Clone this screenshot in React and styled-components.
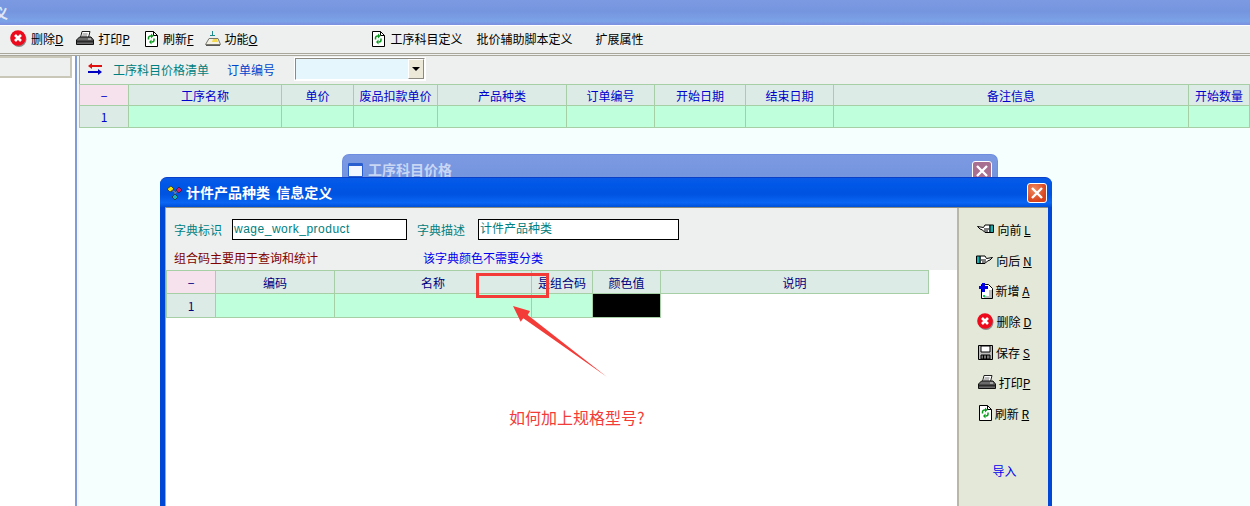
import React from 'react';
import styled, { createGlobalStyle } from 'styled-components';

const FONT = '"Noto Sans CJK SC", "Liberation Sans", sans-serif';

const GlobalStyle = createGlobalStyle`
  html, body {
    margin: 0;
    padding: 0;
    background: #fff;
  }
  body {
    width: 1250px;
    height: 506px;
    overflow: hidden;
    font: 12px ${FONT};
  }
  u {
    text-underline-offset: 1px;
  }
`;

const Page = styled.div`
  position: relative;
  display: flex;
  flex-direction: column;
  width: 1250px;
  height: 506px;
  overflow: hidden;
`;

const TitleBar = styled.div`
  flex: none;
  display: flex;
  align-items: center;
  height: 25px;
  padding-bottom: 1px;
  box-sizing: border-box;
  margin-bottom: 1px;
  background: linear-gradient(#7c9ae2 0, #7595df 45%, #7ba2e6 85%, #7c90e0 100%);
  color: #dfe7f8;
  font-size: 14px;
  font-weight: 700;
  overflow: hidden;
`;

const CutTitle = styled.span`
  margin-left: -6px;
`;

const Toolbar = styled.div`
  flex: none;
  display: flex;
  align-items: center;
  height: 25px;
  padding: 0 0 2px 10px;
  background: #eef0ef;
  border-bottom: 3px double #a9a79b;
  color: #000;
`;

const ToolItem = styled.div`
  display: flex;
  align-items: center;
  gap: ${({ $gap }) => $gap ?? 4}px;
  margin-left: ${({ $ml }) => $ml ?? 0}px;
  white-space: nowrap;
  line-height: 16px;
`;

const Body = styled.div`
  flex: 1;
  display: flex;
  min-height: 0;
`;

const LeftPane = styled.div`
  flex: none;
  width: 75px;
  background: #fff;
`;

const LeftHead = styled.div`
  height: 22px;
  box-sizing: border-box;
  margin-right: 3px;
  background: #eef0ef;
  border: 2px solid #c9c7b8;
  border-left: 0;
`;

const Splitter = styled.div`
  flex: none;
  width: 4px;
  box-sizing: border-box;
  background: #f4f7f6;
  border-left: 2px solid #7f9bd8;
`;

const RightPane = styled.div`
  flex: 1;
  min-width: 0;
  background: #f5fffe;
`;

const FilterBar = styled.div`
  display: flex;
  align-items: center;
  height: 28px;
  padding: 0 0 2px 8px;
  box-sizing: border-box;
  background: #eef0ef;
  border-left: 1px solid #a9a79b;
  color: #008080;
`;

const FilterLabel = styled.span`
  margin-left: ${({ $ml }) => $ml}px;
  color: ${({ $color }) => $color};
  white-space: nowrap;
`;

const Combo = styled.div`
  display: flex;
  justify-content: flex-end;
  width: 130px;
  height: 22px;
  margin-left: 20px;
  box-sizing: border-box;
  background: #e6f6fd;
  border: 1px solid #8c8a80;
  border-right-color: #fff;
  border-bottom-color: #fff;
  outline: 1px solid #fff;
`;

const ComboButton = styled.div`
  display: flex;
  align-items: center;
  justify-content: center;
  width: 16px;
  box-sizing: border-box;
  background: #ece9d8;
  border: 1px solid #8c8a80;
  border-top-color: #fff;
  border-left-color: #fff;

  &::after {
    content: '';
    border: 4px solid transparent;
    border-top: 4px solid #000;
    border-bottom: 0;
  }
`;

const Grid = styled.div`
  display: grid;
  grid-template-columns: ${({ $cols }) => $cols};
  grid-template-rows: ${({ $rows }) => $rows};
  width: max-content;
  color: ${({ $ink }) => $ink};
  border-top: 1px solid #a6cfa6;
  border-left: 1px solid #a6cfa6;
`;

const Cell = styled.div`
  display: flex;
  align-items: center;
  justify-content: center;
  box-sizing: border-box;
  border-right: 1px solid #a6cfa6;
  border-bottom: 1px solid #a6cfa6;
  background: ${({ $bg }) => $bg};
  white-space: nowrap;
  overflow: hidden;
`;

const CORNER = '#f5e2ec';
const HEAD = '#dcebe5';
const ROW = '#bfffdc';

const Window = styled.div`
  position: absolute;
  left: ${({ $x }) => $x}px;
  top: ${({ $y }) => $y}px;
  width: ${({ $w }) => $w}px;
  height: ${({ $h }) => $h}px;
  box-sizing: border-box;
  border-radius: 7px 7px 0 0;
  display: flex;
  flex-direction: column;
`;

const BackWindow = styled(Window)`
  background: linear-gradient(#7c9ae2 0, #7595df 50%, #7ba2e6 100%);
  border: 1px solid #6f8ee0;
  border-bottom: 0;
  padding: 6px 5px 0 5px;
  flex-direction: row;
  align-items: flex-start;
  color: #c9d6f4;
  font-size: 14px;
  font-weight: 700;
  line-height: 16px;
`;

const FrontWindow = styled(Window)`
  background: #0047d6;
  border-top: 1px solid #0a3fc8;
  padding: 0 4px 0 5px;
`;

const WinTitle = styled.div`
  flex: none;
  display: flex;
  align-items: center;
  gap: 4px;
  height: 29px;
  padding: 0 5px 0 7px;
  margin: 0 -4px 0 -5px;
  background: linear-gradient(#0a5ae6 0, #0058e8 20%, #0052e0 55%, #0a66f4 85%, #0050d8 100%);
  color: #fff;
  font-size: 14px;
  font-weight: 700;
  border-radius: 7px 7px 0 0;
`;

const WinCaption = styled.span`
  margin-top: -2px;
`;

const Spacer = styled.div`
  flex: 1;
`;

const CloseBox = styled.div`
  flex: none;
  width: 20px;
  height: 20px;
  box-sizing: border-box;
  display: flex;
  align-items: center;
  justify-content: center;
  border: 1px solid #fff;
  border-radius: 3px;
  background: ${({ $faded }) =>
    $faded ? '#a86f90' : 'radial-gradient(circle at 35% 30%, #ee8a60, #d8431c 70%)'};
`;

const WinBody = styled.div`
  flex: 1;
  display: flex;
  min-height: 0;
  border-top: 1px solid #8d8c80;
`;

const DictPane = styled.div`
  flex: 1;
  min-width: 0;
  background: #fff;
  border-left: 1px solid #a9a79b;
`;

const DictForm = styled.div`
  height: 62px;
  background: #eef0ef;
  color: #008080;
`;

const FormRow = styled.div`
  display: flex;
  align-items: center;
  height: ${({ $h }) => $h}px;
  padding-left: 8px;
`;

const DictInput = styled.div`
  width: ${({ $w }) => $w}px;
  height: 21px;
  margin: 0 10px 0 ${({ $ml }) => $ml}px;
  padding-left: 1px;
  box-sizing: border-box;
  background: #fff;
  border: 1px solid #000;
  line-height: 18px;
  font-family: "Liberation Sans", ${FONT};
  letter-spacing: ${({ $spaced }) => ($spaced ? '0.5px' : '0')};
`;

const Note = styled.span`
  color: ${({ $color }) => $color};
  width: ${({ $w }) => ($w ? `${$w}px` : 'auto')};
`;

const SidePanel = styled.div`
  flex: none;
  width: 91px;
  background: #e4e8d8;
  border-left: 2px solid #b8b7a8;
  box-sizing: border-box;
  display: flex;
  flex-direction: column;
  align-items: center;
  padding-top: 6px;
`;

const SideButton = styled.div`
  display: flex;
  align-items: center;
  justify-content: center;
  gap: 3px;
  height: 30.7px;
  flex: none;
  width: 100%;
  padding-left: 1px;
  box-sizing: border-box;
  white-space: nowrap;
  color: #000;
`;

const ImportLink = styled.div`
  margin-top: 33px;
  padding-left: 2px;
  color: #0000ee;
`;

const RedBox = styled.div`
  position: absolute;
  left: 476px;
  top: 273px;
  width: 73px;
  height: 25px;
  box-sizing: border-box;
  border: 3px solid #f33c38;
`;

const Arrow = styled.svg`
  position: absolute;
  left: 505px;
  top: 300px;
`;

const Question = styled.div`
  position: absolute;
  left: 509px;
  top: 407px;
  color: #f33c38;
  font-size: 16px;
  line-height: 20px;
  white-space: nowrap;
`;

const Icon = styled.svg`
  flex: none;
  display: block;
`;

const TitleGlyph = styled(Icon)`
  margin: 2px 5px 0 0;
`;

const DeleteIcon = () => (
  <Icon width="17" height="17" viewBox="0 0 17 17">
    <circle cx="9" cy="9.5" r="7.5" fill="#8a8a8a" />
    <circle cx="8" cy="8" r="7.8" fill="#ec0a1c" />
    <path d="M5 5l6 6M11 5l-6 6" stroke="#fff" strokeWidth="2.6" />
  </Icon>
);

const PrintIcon = () => (
  <Icon width="18" height="15" viewBox="0 0 18 15">
    <path d="M6 .5h8l-1.500 6h-8z" fill="#fff" stroke="#222" />
    <path d="M6.500 3h5M6 5h5" stroke="#777" />
    <path d="M3.500 6h11.500l2.500 3v4.500H.5V9z" fill="#6a6a6a" stroke="#111" />
    <path d="M1 9.500h16v2H1z" fill="#2a2a2a" />
    <path d="M12 8h3" stroke="#ddd" />
  </Icon>
);

const RefreshIcon = () => (
  <Icon width="13" height="16" viewBox="0 0 13 16">
    <path d="M.5.5h8l4 4v11H.5z" fill="#fff" stroke="#000" />
    <path d="M8.500.5v4h4" fill="none" stroke="#000" />
    <path d="M3.500 8.500V7a2 2 0 0 1 2-2H6" fill="none" stroke="#0a9a1e" strokeWidth="1.5" />
    <path d="M6 2.500L8.500 5 6 7.500z" fill="#0a9a1e" />
    <path d="M9 7.500V9a2 2 0 0 1-2 2h-.5" fill="none" stroke="#0a9a1e" strokeWidth="1.5" />
    <path d="M6.500 8.500L4 11l2.500 2.500z" fill="#0a9a1e" />
  </Icon>
);

const FunctionIcon = () => (
  <Icon width="16" height="16" viewBox="0 0 16 16">
    <path d="M7 0h1v4h2v1H5V4h2z" fill="#1f8a8a" />
    <path d="M4 7.500h9l2.500 6H.5z" fill="#f3f1e4" stroke="#77776c" />
    <path d="M8 8h4l1 3H7z" fill="#f5d94a" />
    <path d="M1 14.500h14" stroke="#555" />
  </Icon>
);

const SwapIcon = () => (
  <Icon width="14" height="12" viewBox="0 0 14 12">
    <path d="M3 3h11" stroke="#e01010" strokeWidth="2" />
    <path d="M4 0L0 3l4 3z" fill="#e01010" />
    <path d="M0 9h11" stroke="#0000c0" strokeWidth="2" />
    <path d="M10 6l4 3-4 3z" fill="#0000c0" />
  </Icon>
);

const WindowIcon = () => (
  <TitleGlyph width="15" height="14" viewBox="0 0 15 14">
    <path d="M.5.5h14v13H.5z" fill="#f4f7ff" stroke="#2b5fd0" />
    <path d="M1 1h13v2H1z" fill="#2b5fd0" />
  </TitleGlyph>
);

const DictIcon = () => (
  <Icon width="15" height="16" viewBox="0 0 15 16">
    <path d="M4 5l4 2v5M8 8l3-2" fill="none" stroke="#888" />
    <path d="M0 4l4-3 3 3-4 3z" fill="#f4e000" stroke="#222" strokeWidth=".7" />
    <path d="M9 5l3-3 3 3-3 3z" fill="#d81870" stroke="#222" strokeWidth=".7" />
    <path d="M5 12l3-3 3 3-3 3z" fill="#20b0b0" stroke="#222" strokeWidth=".7" />
  </Icon>
);

const CloseX = () => (
  <Icon width="14" height="14" viewBox="0 0 14 14">
    <path d="M2 2l10 10M12 2L2 12" stroke="#fff" strokeWidth="2.4" />
  </Icon>
);

const HandLeftIcon = () => (
  <Icon width="17" height="10" viewBox="0 0 17 10">
    <path d="M.5 2.500l6 1L8 1h5v7.500H8L5.500 6 3 5z" fill="#fff" stroke="#000" />
    <path d="M7 5h5M7 7h4" stroke="#000" />
    <path d="M13 1h3.500v7.500H13z" fill="#16b0b0" stroke="#000" />
  </Icon>
);

const HandRightIcon = () => (
  <Icon width="17" height="10" viewBox="0 0 17 10">
    <path d="M16.500 2.500l-6 1L9 1H4v7.500h5L11.500 6 14 5z" fill="#fff" stroke="#000" />
    <path d="M10 5H5M10 7H6" stroke="#000" />
    <path d="M4 1H.5v7.500H4z" fill="#16b0b0" stroke="#000" />
  </Icon>
);

const NewIcon = () => (
  <Icon width="14" height="17" viewBox="0 0 14 17">
    <path d="M2.500 2.500h7l4 4v10h-11z" fill="#fff" stroke="#000" />
    <path d="M10 8h3v8H5v-2h5z" fill="#bbb" />
    <path d="M0 4h3V1h3v3h3v3H6v3H3V7H0z" fill="#0000e0" />
    <path d="M4 13h2v2H4z" fill="#10d060" />
  </Icon>
);

const SaveIcon = () => (
  <Icon width="15" height="15" viewBox="0 0 15 15">
    <path d="M.5.5h14v14H.5z" fill="#bdbdbd" stroke="#000" />
    <path d="M3 1h9v6H3z" fill="#fff" stroke="#000" />
    <path d="M3 10h9v4H3z" fill="#777" stroke="#000" />
    <path d="M5.500 10v4M8.500 10v4" stroke="#000" />
  </Icon>
);

const mainCols = [49, 153, 72, 84, 129, 88, 91, 88, 355, 61];
const mainHeads = ['工序名称', '单价', '废品扣款单价', '产品种类', '订单编号', '开始日期', '结束日期', '备注信息', '开始数量'];
const dictCols = [49, 119, 197, 61, 68, 268];
const dictHeads = ['编码', '名称', '是组合码', '颜色值', '说明'];

const App = () => (
  <Page>
    <GlobalStyle />
    <TitleBar>
      <CutTitle>义</CutTitle>
    </TitleBar>
    <Toolbar>
      <ToolItem>
        <DeleteIcon />
        <span>删除<u>D</u></span>
      </ToolItem>
      <ToolItem $ml={13}>
        <PrintIcon />
        <span>打印<u>P</u></span>
      </ToolItem>
      <ToolItem $ml={15} $gap={5}>
        <RefreshIcon />
        <span>刷新<u>F</u></span>
      </ToolItem>
      <ToolItem $ml={11}>
        <FunctionIcon />
        <span>功能<u>O</u></span>
      </ToolItem>
      <ToolItem $ml={115} $gap={5}>
        <RefreshIcon />
        <span>工序科目定义</span>
      </ToolItem>
      <ToolItem $ml={14}>批价辅助脚本定义</ToolItem>
      <ToolItem $ml={23}>扩展属性</ToolItem>
    </Toolbar>
    <Body>
      <LeftPane>
        <LeftHead />
      </LeftPane>
      <Splitter />
      <RightPane>
        <FilterBar>
          <SwapIcon />
          <FilterLabel $ml={11} $color="#008080">工序科目价格清单</FilterLabel>
          <FilterLabel $ml={18} $color="#0044cc">订单编号</FilterLabel>
          <Combo>
            <ComboButton />
          </Combo>
        </FilterBar>
        <Grid
          $ink="#0000cc"
          $rows="21px 22px"
          $cols={mainCols.map((c) => `${c}px`).join(' ')}
        >
          <Cell $bg={CORNER}>−</Cell>
          {mainHeads.map((h) => (
            <Cell key={h} $bg={HEAD}>{h}</Cell>
          ))}
          <Cell $bg={HEAD}>1</Cell>
          {mainHeads.map((h) => (
            <Cell key={h} $bg={ROW} />
          ))}
        </Grid>
      </RightPane>
    </Body>

    <BackWindow $x={342} $y={154} $w={656} $h={40}>
      <WindowIcon />
      <span>工序科目价格</span>
      <Spacer />
      <CloseBox $faded>
        <CloseX />
      </CloseBox>
    </BackWindow>

    <FrontWindow $x={160} $y={177} $w={892} $h={329}>
      <WinTitle>
        <DictIcon />
        <WinCaption>计件产品种类&nbsp;&nbsp;信息定义</WinCaption>
        <Spacer />
        <CloseBox>
          <CloseX />
        </CloseBox>
      </WinTitle>
      <WinBody>
        <DictPane>
          <DictForm>
            <FormRow $h={43}>
              <span>字典标识</span>
              <DictInput $w={175} $ml={10} $spaced>wage_work_product</DictInput>
              <span>字典描述</span>
              <DictInput $w={201} $ml={13}>计件产品种类</DictInput>
            </FormRow>
            <FormRow $h={12}>
              <Note $color="#800000" $w={249}>组合码主要用于查询和统计</Note>
              <Note $color="#0000ee">该字典颜色不需要分类</Note>
            </FormRow>
          </DictForm>
          <Grid
            $ink="#000080"
            $rows="23px 24px"
            $cols={dictCols.map((c) => `${c}px`).join(' ')}
          >
            <Cell $bg={CORNER}>−</Cell>
            {dictHeads.map((h) => (
              <Cell key={h} $bg={HEAD}>{h}</Cell>
            ))}
            <Cell $bg={HEAD}>1</Cell>
            <Cell $bg={ROW} />
            <Cell $bg={ROW} />
            <Cell $bg={ROW} />
            <Cell $bg="#000" />
          </Grid>
        </DictPane>
        <SidePanel>
          <SideButton><HandLeftIcon /><span>向前 <u>L</u></span></SideButton>
          <SideButton><HandRightIcon /><span>向后 <u>N</u></span></SideButton>
          <SideButton><NewIcon /><span>新增 <u>A</u></span></SideButton>
          <SideButton><DeleteIcon /><span>删除 <u>D</u></span></SideButton>
          <SideButton><SaveIcon /><span>保存 <u>S</u></span></SideButton>
          <SideButton><PrintIcon /><span>打印<u>P</u></span></SideButton>
          <SideButton><RefreshIcon /><span>刷新 <u>R</u></span></SideButton>
          <ImportLink>导入</ImportLink>
        </SidePanel>
      </WinBody>
    </FrontWindow>

    <RedBox />
    <Arrow width="105" height="80" viewBox="0 0 105 80">
      <path d="M8 6L25 11 22.700 15 101.700 76.700 18.300 18.300 15.700 21.700z" fill="#f33c38" />
    </Arrow>
    <Question>如何加上规格型号?</Question>
  </Page>
);

export default App;
